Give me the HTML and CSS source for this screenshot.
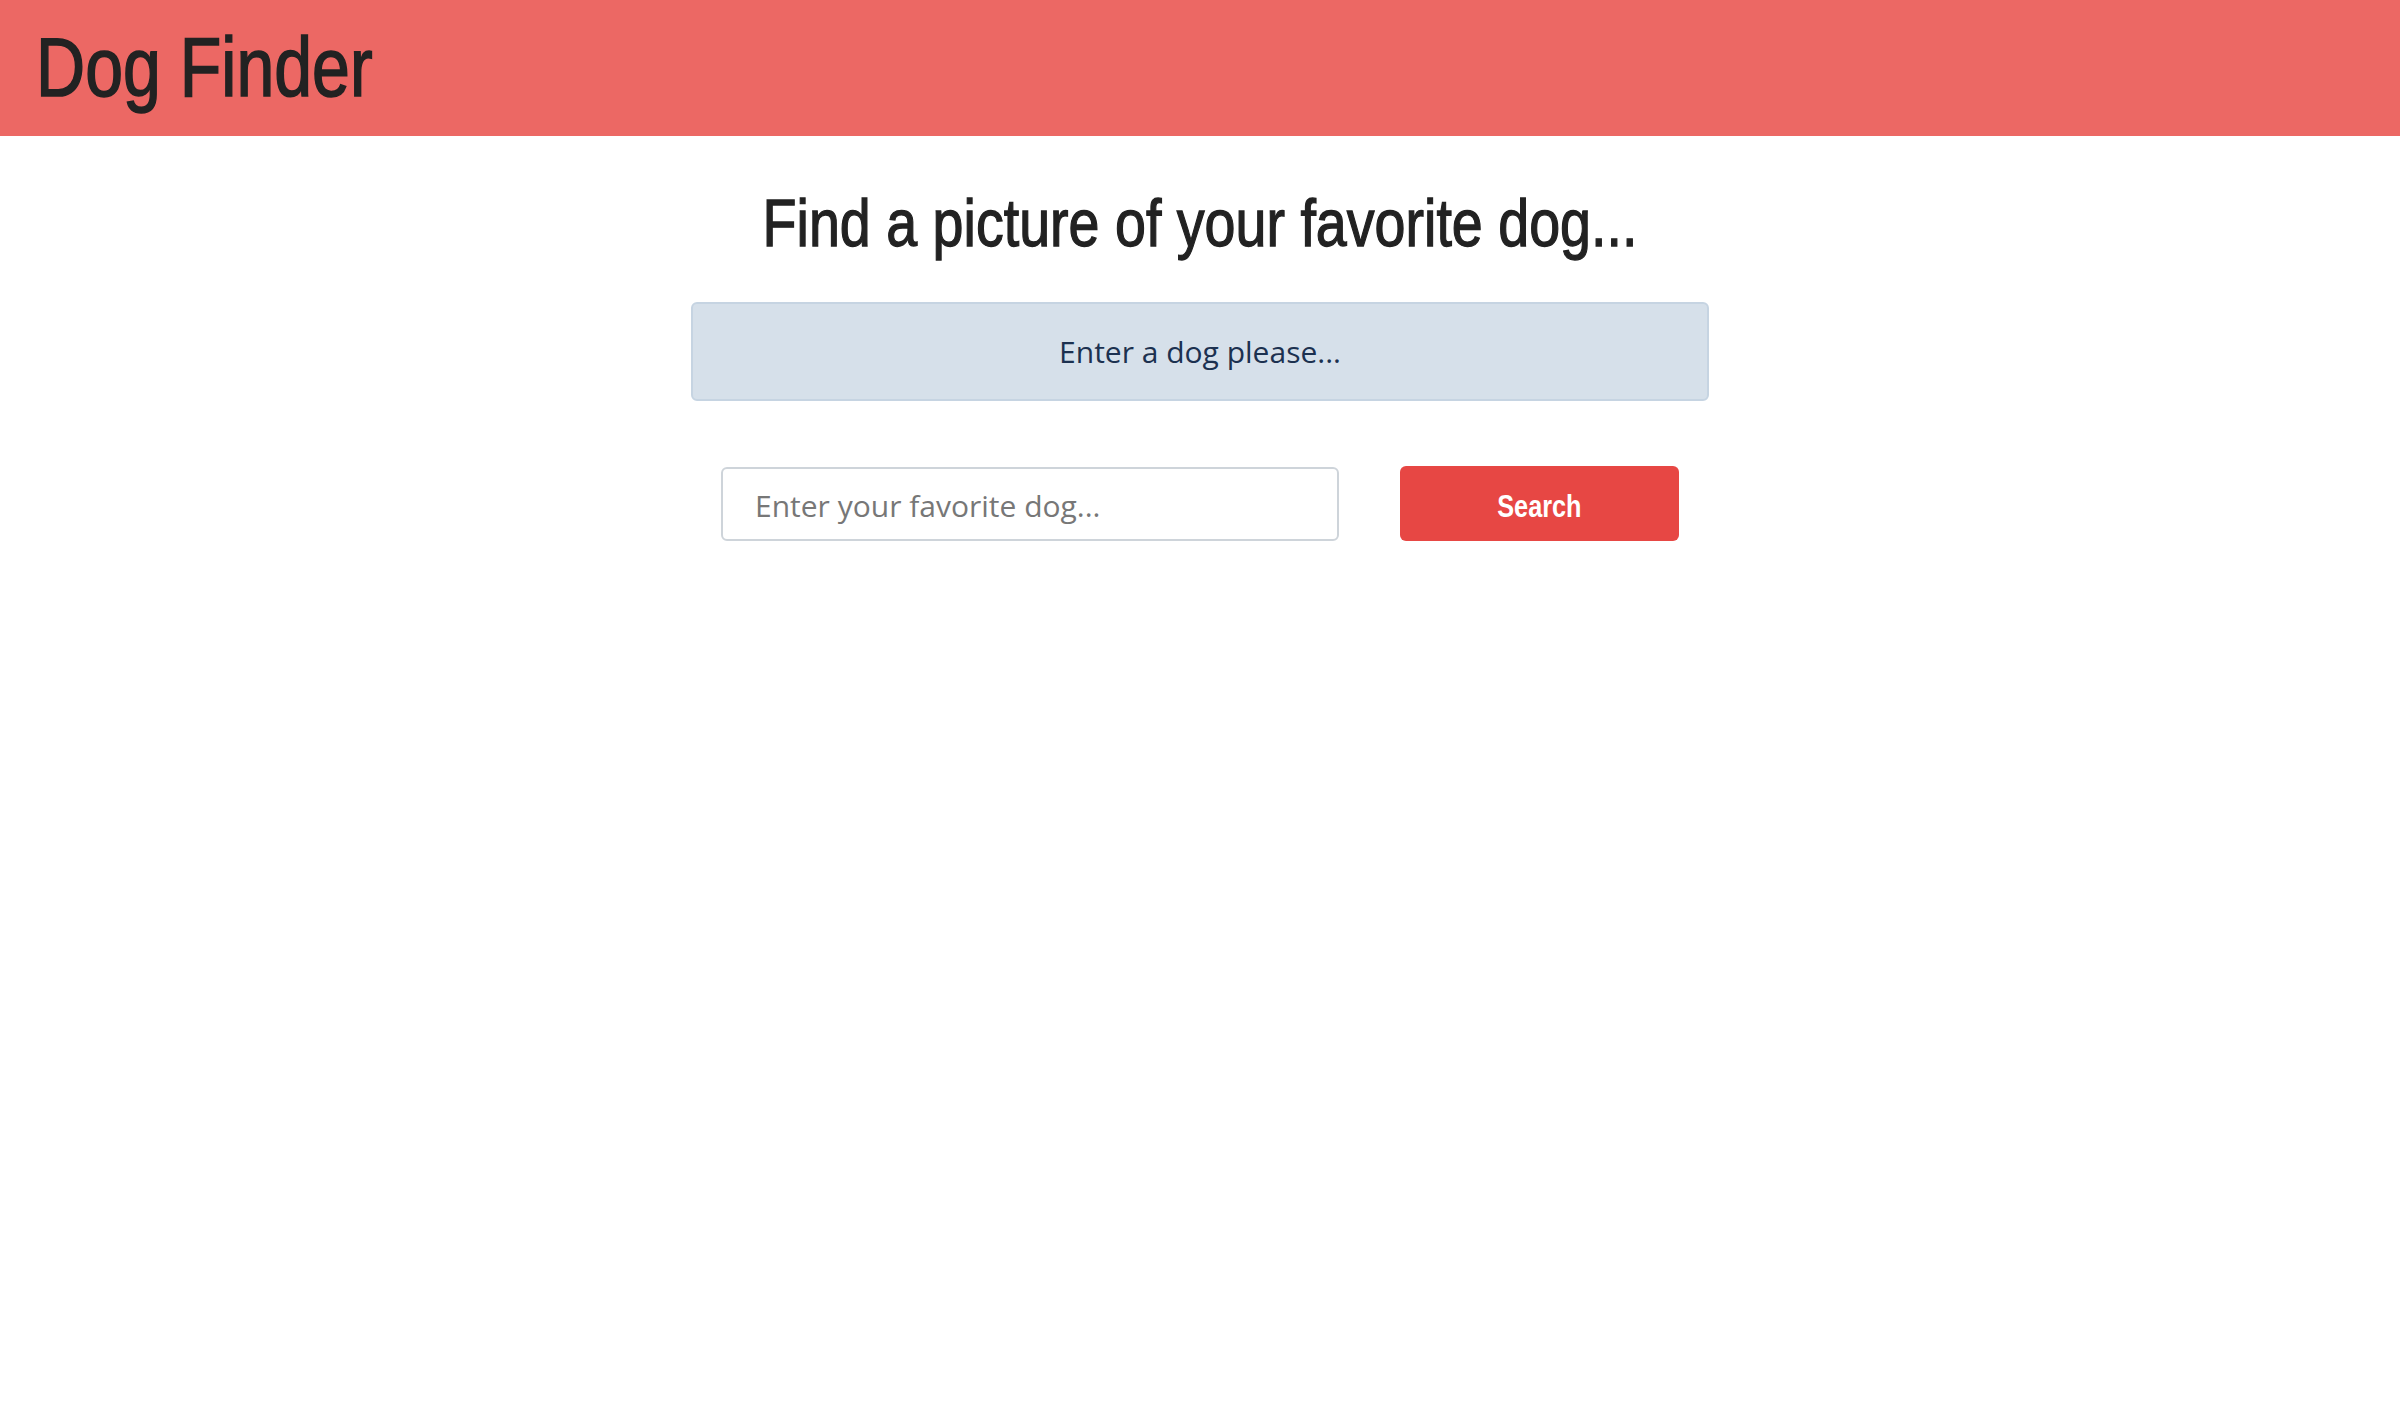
FILE: index.html
```html
<!DOCTYPE html>
<html lang="en">
<head>
<meta charset="utf-8">
<title>Dog Finder</title>
<link rel="stylesheet" href="styles.css">
</head>
<body>
<header class="topbar">
  <h1 class="brand"><span class="narrow narrow-left">Dog Finder</span></h1>
</header>
<main class="content">
  <h2 class="headline"><span class="narrow">Find a picture of your favorite dog...</span></h2>
  <div class="notice">Enter a dog please...</div>
  <form class="search-row">
    <input class="search-input" type="text" placeholder="Enter your favorite dog...">
    <button class="search-btn" type="button"><span class="narrow">Search</span></button>
  </form>
</main>
</body>
</html>
```
FILE: styles.css
```css
html, body {
  margin: 0;
  padding: 0;
  background: #ffffff;
}
body {
  font-family: "Open Sans", "Noto Sans", sans-serif;
  color: #222222;
}
.narrow {
  display: inline-block;
  white-space: nowrap;
  font-family: "Liberation Sans", Arial, sans-serif;
  transform: scaleX(0.82);
  transform-origin: center;
}
.narrow-left {
  transform-origin: left center;
}
.topbar {
  height: 136px;
  background: #ec6864;
  padding: 22px 0 0 36px;
  box-sizing: border-box;
}
.brand {
  margin: 0;
  font-weight: 400;
  font-size: 84px;
  line-height: 84px;
  color: #222222;
  -webkit-text-stroke: 1.6px #222222;
}
.brand .narrow {
  transform: scaleX(0.81);
}
.content {
  width: 1018px;
  margin: 0 auto;
  display: flex;
  flex-direction: column;
}
.headline {
  margin: 47px 0 0 0;
  display: flex;
  justify-content: center;
  font-weight: 400;
  font-size: 67px;
  line-height: 80px;
  color: #222222;
  -webkit-text-stroke: 1.3px #222222;
}
.headline .narrow {
  transform: scaleX(0.83);
}
.notice {
  margin-top: 39px;
  height: 99px;
  box-sizing: border-box;
  display: flex;
  align-items: center;
  justify-content: center;
  background: #d6e0ea;
  border: 2px solid #c6d4e2;
  border-radius: 6px;
  color: #1c3150;
  font-size: 30px;
}
.search-row {
  margin: 66px 0 0 0;
  padding: 0 30px;
  display: flex;
  gap: 61px;
}
.search-input {
  width: 618px;
  height: 74px;
  box-sizing: border-box;
  border: 2px solid #ced4da;
  border-radius: 6px;
  padding: 2px 32px 0 32px;
  font-family: "Open Sans", "Noto Sans", sans-serif;
  font-size: 30px;
  color: #495057;
  outline: none;
}
.search-input::placeholder {
  color: #777777;
}
.search-btn {
  width: 279px;
  height: 75px;
  margin-top: -1px;
  padding: 6px 0 0 0;
  border: none;
  border-radius: 6px;
  background: #e74744;
  color: #ffffff;
  font-weight: 700;
  font-size: 32px;
  cursor: pointer;
}
.search-btn .narrow {
  transform: scaleX(0.79);
}
```
